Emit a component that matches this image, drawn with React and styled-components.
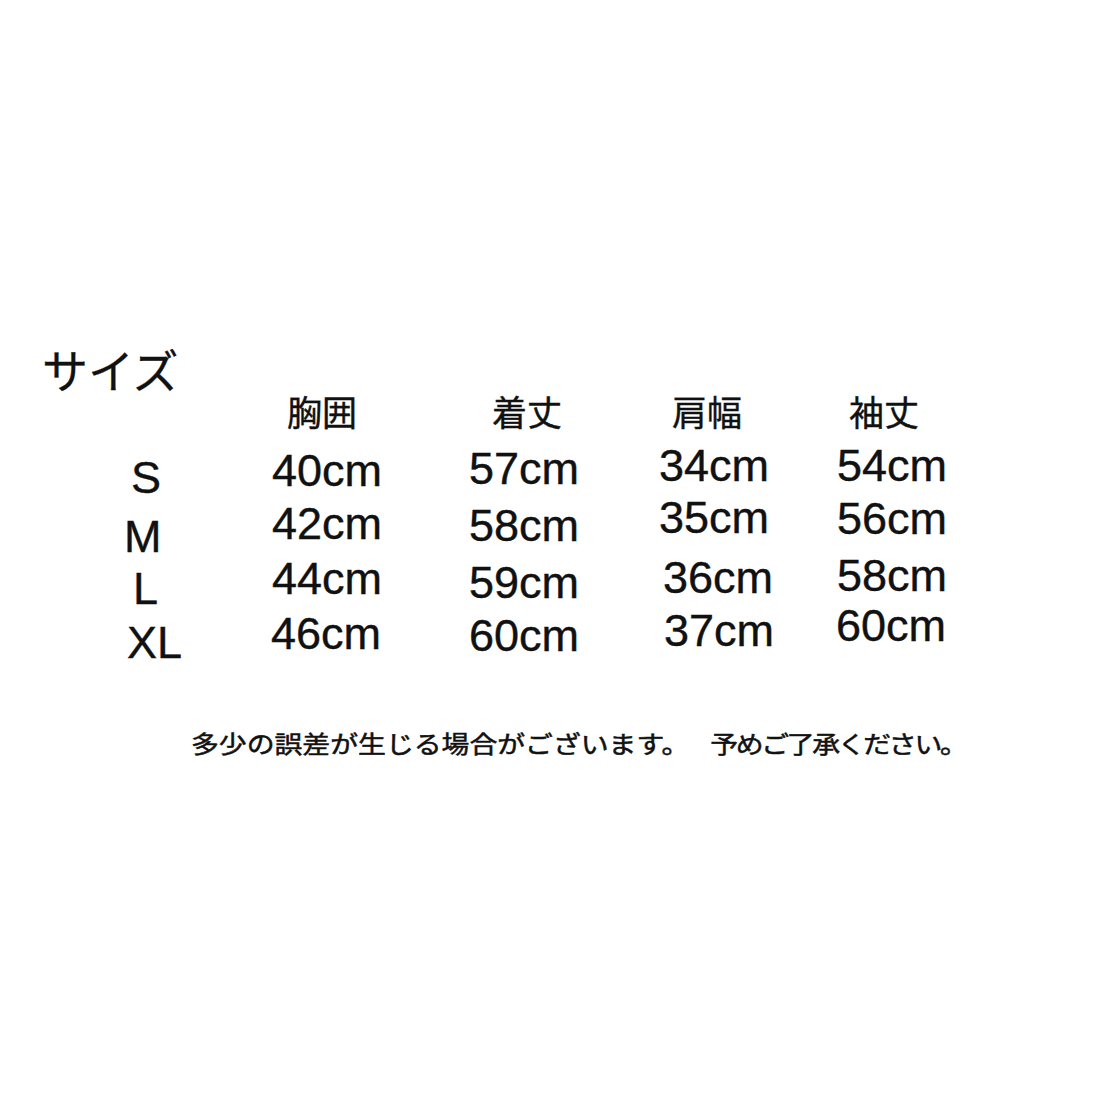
import React from 'react';
import styled, { createGlobalStyle } from 'styled-components';

const GlobalStyle = createGlobalStyle`
	html, body {
		margin: 0;
		padding: 0;
		background: #ffffff;
	}
	body {
		font-family: 'Liberation Sans', 'Noto Sans CJK JP', sans-serif;
		color: #111111;
	}
`;

const sizes = [
	{ label: 'S', top: 28, indent: 7 },
	{ label: 'M', top: 15, indent: 0 },
	{ label: 'L', top: 8, indent: 9 },
	{ label: 'XL', top: 10, indent: 3 },
];

const columns = [
	{
		title: '胸囲',
		width: 197,
		headIndent: 15,
		cells: [
			{ text: '40cm', top: 21 },
			{ text: '42cm', top: 9 },
			{ text: '44cm', top: 11 },
			{ text: '46cm', top: 11, indent: -1 },
		],
	},
	{
		title: '着丈',
		width: 190,
		headIndent: 23,
		cells: [
			{ text: '57cm', top: 19 },
			{ text: '58cm', top: 13 },
			{ text: '59cm', top: 13 },
			{ text: '60cm', top: 9 },
		],
	},
	{
		title: '肩幅',
		width: 178,
		headIndent: 13,
		cells: [
			{ text: '34cm', top: 16 },
			{ text: '35cm', top: 8 },
			{ text: '36cm', top: 16, indent: 4 },
			{ text: '37cm', top: 9, indent: 5 },
		],
	},
	{
		title: '袖丈',
		width: 180,
		headIndent: 12,
		cells: [
			{ text: '54cm', top: 16 },
			{ text: '56cm', top: 9 },
			{ text: '58cm', top: 13 },
			{ text: '60cm', top: 6, indent: -1 },
		],
	},
];

export default function App() {
	return (
		<Page>
			<GlobalStyle />
			<Title>サイズ</Title>
			<Table>
				<Column $width={148}>
					<Head />
					{sizes.map((s) => (
						<SizeLabel key={s.label} $top={s.top} $indent={s.indent}>
							{s.label}
						</SizeLabel>
					))}
				</Column>
				{columns.map((col) => (
					<Column key={col.title} $width={col.width}>
						<Head $indent={col.headIndent}>{col.title}</Head>
						{col.cells.map((c) => (
							<Value key={c.text} $top={c.top} $indent={c.indent || 0}>
								{c.text}
							</Value>
						))}
					</Column>
				))}
			</Table>
			<Note>
				<NotePart $spacing={0}>多少の誤差が生じる場合がございます。</NotePart>
				<NotePart $spacing={-2}>予めご了承ください。</NotePart>
			</Note>
		</Page>
	);
}

const Page = styled.div`
	width: 1100px;
	height: 1100px;
	box-sizing: border-box;
	padding: 346px 0 0 42px;
	background: #ffffff;
	overflow: hidden;
`;

const Title = styled.div`
	font-family: 'Noto Sans CJK JP', sans-serif;
	font-size: 46px;
	line-height: 44px;
	height: 44px;
	-webkit-text-stroke: 0.3px #111111;
`;

const Table = styled.div`
	display: flex;
	align-items: flex-start;
	padding-left: 82px;
	margin-top: 4px;
`;

const Column = styled.div`
	display: flex;
	flex-direction: column;
	width: ${(p) => p.$width}px;
	flex: none;
`;

const Head = styled.div`
	height: 34px;
	font-family: 'Noto Sans CJK JP', sans-serif;
	font-size: 35px;
	line-height: 34px;
	padding-left: ${(p) => p.$indent || 0}px;
	white-space: nowrap;
	-webkit-text-stroke: 0.4px #111111;
`;

const SizeLabel = styled.div`
	font-size: 45px;
	line-height: 44px;
	height: 44px;
	margin-top: ${(p) => p.$top}px;
	padding-left: ${(p) => p.$indent}px;
	-webkit-text-stroke: 0.4px #111111;
`;

const Value = styled.div`
	font-size: 45px;
	line-height: 44px;
	height: 44px;
	margin-top: ${(p) => p.$top}px;
	margin-left: ${(p) => p.$indent}px;
	white-space: nowrap;
	-webkit-text-stroke: 0.4px #111111;
`;

const Note = styled.div`
	display: flex;
	gap: 18px;
	margin-top: 63px;
	margin-left: 149px;
	font-family: 'Noto Sans CJK JP', sans-serif;
	font-size: 24px;
	line-height: 30px;
	transform: scaleX(1.16);
	transform-origin: left center;
	-webkit-text-stroke: 0.5px #111111;
`;

const NotePart = styled.span`
	letter-spacing: ${(p) => p.$spacing}px;
	white-space: nowrap;
`;
